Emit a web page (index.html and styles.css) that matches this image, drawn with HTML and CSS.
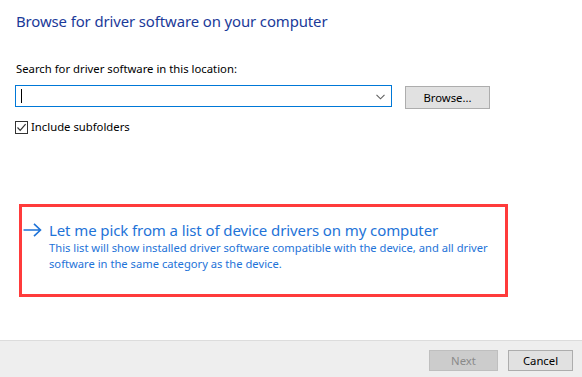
FILE: index.html
```html
<!DOCTYPE html>
<html>
<head>
<meta charset="utf-8">
<link rel="stylesheet" href="styles.css">
</head>
<body>
<div class="dialog">
  <main class="content">
    <h1 class="title">Browse for driver software on your computer</h1>
    <div class="label">Search for driver software in this location:</div>
    <div class="path-row">
      <div class="combo">
        <span class="caret"></span>
        <svg class="chevron" width="9" height="6" viewBox="0 0 9 6"><path d="M0.5 0.8 L4.5 4.8 L8.5 0.8" fill="none" stroke="#5f5f5f" stroke-width="1.1"/></svg>
      </div>
      <button class="btn browse">Browse...</button>
    </div>
    <label class="check">
      <span class="box"><svg width="11" height="11" viewBox="0 0 11 11"><path d="M1.5 5.5 L4.2 8.3 L9.6 2.2" fill="none" stroke="#333" stroke-width="1.2"/></svg></span>
      <span>Include subfolders</span>
    </label>
    <div class="pick">
      <div class="pick-head">
        <svg class="arrow" width="19" height="14" viewBox="0 0 19 14"><path d="M0.5 7 H17.5 M11 0.8 L17.5 7 L11 13.2" fill="none" stroke="#1e73d8" stroke-width="1.6"/></svg>
        <span class="pick-title">Let me pick from a list of device drivers on my computer</span>
      </div>
      <p class="pick-desc">This list will show installed driver software compatible with the device, and all driver software in the same category as the device.</p>
    </div>
  </main>
  <footer class="footer">
    <button class="btn next" disabled>Next</button>
    <button class="btn cancel">Cancel</button>
  </footer>
</div>
</body>
</html>
```

FILE: styles.css
```css
* { box-sizing: border-box; }
html, body { margin: 0; padding: 0; }
body {
  width: 582px;
  height: 377px;
  background: #ffffff;
  font-family: "Noto Sans", "Open Sans", sans-serif;
  color: #000;
  overflow: hidden;
}
.dialog {
  display: flex;
  flex-direction: column;
  height: 377px;
}
.content {
  height: 340px;
  padding: 10px 0 0 16px;
}
.title {
  margin: 0;
  font-weight: normal;
  font-size: 14.9px;
  line-height: 22px;
  color: #1b3a99;
  letter-spacing: -0.1px;
}
.label {
  margin-top: 29px;
  font-size: 11.3px;
  line-height: 16px;
}
.path-row {
  display: flex;
  margin-top: 8px;
  align-items: flex-start;
}
.combo {
  position: relative;
  width: 377px;
  height: 22px;
  margin-left: -1px;
  border: 1px solid #0078d7;
  background: #fff;
}
.caret {
  position: absolute;
  left: 5px;
  top: 3px;
  width: 1px;
  height: 14px;
  background: #000;
}
.chevron {
  position: absolute;
  right: 6px;
  top: 8px;
}
.btn {
  font-family: "Noto Sans", "Open Sans", sans-serif;
  font-size: 11.3px;
  padding: 0;
  background: #e1e1e1;
  border: 1px solid #adadad;
  color: #000;
}
.browse {
  width: 85px;
  height: 23px;
  margin-left: 13px;
  margin-top: 1px;
}
.check {
  display: flex;
  align-items: center;
  gap: 3px;
  margin-top: 10px;
  margin-left: -1px;
  font-size: 11.3px;
  line-height: 16px;
}
.box {
  width: 13px;
  height: 13px;
  border: 1px solid #333;
  display: flex;
  align-items: center;
  justify-content: center;
}
.pick {
  width: 489px;
  height: 93px;
  margin-top: 69px;
  margin-left: 3px;
  border: 3px solid #ff3b3b;
  padding: 13px 0 0 1px;
}
.pick-head {
  display: flex;
  align-items: center;
  gap: 7px;
}
.arrow { flex: none; }
.pick-title {
  font-size: 15px;
  line-height: 20px;
  color: #1e73d8;
  letter-spacing: -0.1px;
}
.pick-desc {
  margin: 0 0 0 26px;
  font-size: 11.2px;
  line-height: 16px;
  color: #1e73d8;
  width: 450px;
}
.footer {
  flex: 1;
  background: #eeeeee;
  border-top: 1px solid #dcdcdc;
  display: flex;
  justify-content: flex-end;
  align-items: flex-start;
  padding: 9px 9px 0 0;
  gap: 10px;
}
.next {
  width: 69px;
  height: 21px;
  background: #cccccc;
  border-color: #bfbfbf;
  color: #8a8a8a;
}
.cancel {
  width: 65px;
  height: 21px;
}
```
